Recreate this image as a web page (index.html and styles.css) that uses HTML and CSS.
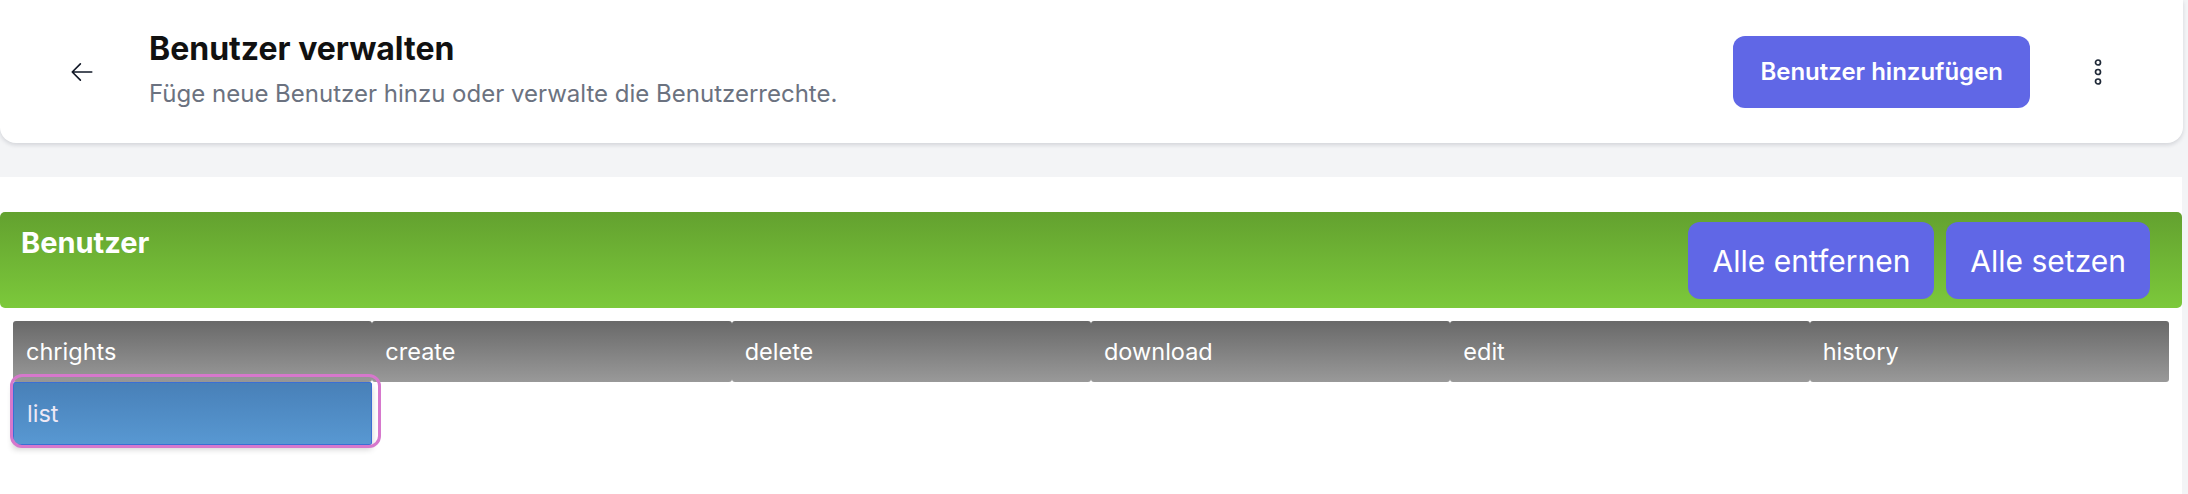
FILE: index.html
```html
<!DOCTYPE html>
<html lang="de">
<head>
    <meta charset="utf-8"/>
    <meta content="width=device-width, initial-scale=1.0" name="viewport"/>
    <title>Benutzer verwalten</title>
    <link rel="stylesheet" href="styles.css">
</head>
<body>
    <header class="page-header">
        <button class="back" type="button" aria-label="Zurück">
            <svg width="26" height="26" viewBox="0 0 24 24" fill="none" stroke="#111827" stroke-width="1.5" stroke-linecap="round" stroke-linejoin="round">
                <path d="M10.5 19.5L3 12m0 0l7.5-7.5M3 12h18"/>
            </svg>
        </button>
        <div class="titles">
            <h1>Benutzer verwalten</h1>
            <p>Füge neue Benutzer hinzu oder verwalte die Benutzerrechte.</p>
        </div>
        <button class="btn-primary" type="button">Benutzer hinzufügen</button>
        <button class="more" type="button" aria-label="Mehr">
            <svg width="12" height="30" viewBox="0 0 12 30" fill="none" stroke="#1f2937" stroke-width="1.7">
                <circle cx="6" cy="5.5" r="2.5"/>
                <circle cx="6" cy="15" r="2.5"/>
                <circle cx="6" cy="24.5" r="2.5"/>
            </svg>
        </button>
    </header>

    <main class="content">
        <section class="group">
            <div class="group-head">
                <h2>Benutzer</h2>
                <div class="actions">
                    <button type="button">Alle entfernen</button>
                    <button type="button">Alle setzen</button>
                </div>
            </div>
            <div class="rights">
                <div class="right">chrights</div>
                <div class="right">create</div>
                <div class="right">delete</div>
                <div class="right">download</div>
                <div class="right">edit</div>
                <div class="right">history</div>
                <div class="right on">list</div>
            </div>
        </section>
    </main>
</body>
</html>
```

FILE: styles.css
```css
body {
    margin: 0;
    background-color: #f3f4f6;
    font-family: Inter, "Noto Sans", sans-serif;
}

button {
    font-family: inherit;
    cursor: pointer;
}

.page-header {
    width: 2183px;
    height: 143px;
    box-sizing: border-box;
    padding: 0 65px 0 69px;
    display: flex;
    align-items: center;
    background-color: #ffffff;
    border-radius: 0 0 16px 16px;
    box-shadow: 0 2px 4px rgba(15, 23, 42, 0.14);
}

.back {
    width: 26px;
    height: 26px;
    padding: 0;
    border: none;
    background: none;
    display: flex;
}

.titles {
    flex: 1;
    margin: 0 0 4px 54px;
}

.titles h1 {
    margin: 0;
    font-size: 32px;
    line-height: 36px;
    font-weight: 700;
    color: #111111;
}

.titles p {
    margin: 12px 0 0;
    font-size: 24px;
    line-height: 30px;
    color: #6b7280;
}

.btn-primary {
    height: 72px;
    padding: 0 27px;
    border: none;
    border-radius: 12px;
    background-color: #6067e6;
    color: #ffffff;
    font-size: 24px;
    font-weight: 600;
}

.more {
    width: 40px;
    height: 40px;
    margin-left: 48px;
    padding: 0;
    border: none;
    background: none;
    display: flex;
    align-items: center;
    justify-content: center;
}

.content {
    width: 2182px;
    min-height: 317px;
    margin-top: 34px;
    padding-top: 35px;
    box-sizing: border-box;
    background-color: #ffffff;
}

.group-head {
    height: 96px;
    box-sizing: border-box;
    padding: 10px 32px 9px 21px;
    display: flex;
    justify-content: space-between;
    align-items: flex-start;
    background: linear-gradient(#63a12f, #7cc93b);
    border-radius: 5px;
}

.group-head h2 {
    margin: 3px 0 0;
    font-size: 29px;
    line-height: 36px;
    font-weight: 700;
    color: #ffffff;
}

.actions {
    display: flex;
    gap: 12px;
}

.actions button {
    height: 77px;
    padding: 0 24px;
    border: none;
    border-radius: 12px;
    background-color: #6067e6;
    color: #ffffff;
    font-size: 30px;
    font-weight: 400;
}

.rights {
    display: flex;
    flex-wrap: wrap;
    margin: 13px 13px 0;
}

.right {
    width: calc(100% / 6);
    height: 61px;
    box-sizing: border-box;
    padding-left: 13px;
    display: flex;
    align-items: center;
    background: linear-gradient(#696969, #999999);
    border-radius: 3px;
    color: #ffffff;
    font-size: 23.5px;
}

.right.on {
    position: relative;
    height: 63px;
    background: linear-gradient(#4880b8, #5898d2);
    border: 1px solid #3b6fd4;
    border-radius: 2px;
    color: #eee8f5;
    box-shadow: 0 4px 6px rgba(0, 0, 0, 0.2);
}

.right.on::after {
    content: "";
    position: absolute;
    left: -4px;
    right: -10px;
    top: -9px;
    bottom: -4px;
    border: 3px solid #d678cc;
    border-radius: 12px;
}
```
